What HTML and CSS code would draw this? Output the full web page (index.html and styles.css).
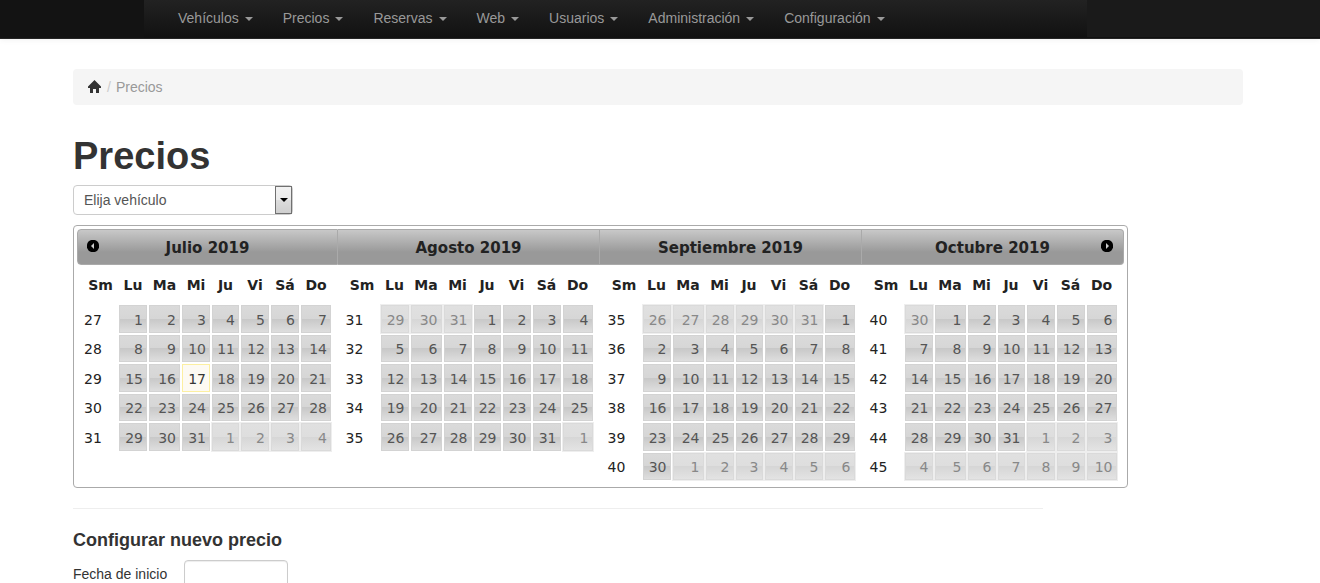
FILE: index.html
```html
<!DOCTYPE html>
<html lang="es">
<head>
<meta charset="utf-8">
<title>Precios</title>
<link rel="stylesheet" href="styles.css">
</head>
<body>
<header class="navbar">
  <div class="navbar-brand"></div>
  <nav class="navbar-menu">
    <a class="nav-link" href="#">Vehículos<span class="caret"></span></a>
    <a class="nav-link" href="#">Precios<span class="caret"></span></a>
    <a class="nav-link" href="#">Reservas<span class="caret"></span></a>
    <a class="nav-link" href="#">Web<span class="caret"></span></a>
    <a class="nav-link" href="#">Usuarios<span class="caret"></span></a>
    <a class="nav-link" href="#">Administración<span class="caret"></span></a>
    <a class="nav-link" href="#">Configuración<span class="caret"></span></a>
  </nav>
  <div class="navbar-user"></div>
</header>
<main class="page">
  <ul class="breadcrumb">
    <li><a class="home" href="#" aria-label="Inicio"><svg width="14" height="14" viewBox="0 0 14 14"><path fill="#333" d="M6.5 0L0 6.500V8H2V13H5V9H8V13H11V8H13V6.500Z"/></svg></a></li>
    <li class="divider">/</li>
    <li class="active">Precios</li>
  </ul>
  <h1 class="title">Precios</h1>
  <div class="select-wrap">
    <select class="select" aria-label="Vehículo"><option>Elija vehículo</option></select>
  </div>
  <div class="datepicker" id="datepicker"></div>
  <hr class="rule">
  <h4 class="subtitle">Configurar nuevo precio</h4>
  <form class="form-row">
    <label class="label" for="start">Fecha de inicio</label>
    <input class="input" id="start" type="text">
  </form>
</main>
<script src="calendar.js"></script>
</body>
</html>
```
FILE: calendar.js
```js
const MONTHS = [
  { name: "Julio", month: 6, week: 27, rows: 5 },
  { name: "Agosto", month: 7, week: 31, rows: 5 },
  { name: "Septiembre", month: 8, week: 35, rows: 6 },
  { name: "Octubre", month: 9, week: 40, rows: 6 }
];
const YEAR = 2019;
const DAYS = ["Lu", "Ma", "Mi", "Ju", "Vi", "Sá", "Do"];
const arrow = (label, side, points) =>
  `<button class="step ${side}" type="button" aria-label="${label}"><svg width="12" height="12" viewBox="0 0 12 12"><circle cx="6" cy="6" r="6.2"/><path fill="#ccc" d="${points}"/></svg></button>`;

function monthHtml(m, index) {
  const offset = (new Date(YEAR, m.month, 1).getDay() + 6) % 7;
  let rows = "";
  for (let r = 0; r < m.rows; r++) {
    let cells = `<td class="week">${m.week + r}</td>`;
    for (let d = 0; d < 7; d++) {
      const date = new Date(YEAR, m.month, 1 - offset + r * 7 + d);
      const day = date.getDate();
      if (date.getMonth() !== m.month) {
        cells += `<td class="other"><span class="day">${day}</span></td>`;
      } else {
        const today = m.month === 6 && day === 17 ? " today" : "";
        cells += `<td><a class="day${today}" href="#">${day}</a></td>`;
      }
    }
    rows += `<tr>${cells}</tr>`;
  }
  const prev = index === 0 ? arrow("Anterior", "prev", "M7 3V9L4 6Z") : "";
  const next = index === MONTHS.length - 1 ? arrow("Siguiente", "next", "M5 3V9L8 6Z") : "";
  return `<section class="month"><div class="month-head">${prev}${m.name} ${YEAR}${next}</div>
    <table class="days"><colgroup><col class="c-week"><col class="c-lu"><col class="c-ma"><col class="c-mi"><col class="c-ju"><col class="c-vi"><col class="c-sa"><col class="c-do"></colgroup>
    <thead><tr><th>Sm</th>${DAYS.map(d => `<th>${d}</th>`).join("")}</tr></thead>
    <tbody>${rows}</tbody></table></section>`;
}
document.getElementById("datepicker").innerHTML = MONTHS.map(monthHtml).join("");
```
FILE: styles.css
```css
*, *::before, *::after { box-sizing: border-box; }
body { margin: 0; background: #fff; color: #333; font: 14px/20px "Liberation Sans", Arial, sans-serif; overflow: hidden; }
a { text-decoration: none; }

.navbar { display: flex; height: 39px; border-bottom: 1px solid #252525; background: linear-gradient(#222, #111); box-shadow: 0 1px 6px rgba(0, 0, 0, .06); }
.navbar-brand { flex: 0 0 144px; background: #131313; }
.navbar-menu { display: flex; flex: 0 0 943px; padding-left: 19px; }
.nav-link { padding: 8px 15px; color: #999; white-space: nowrap; }
.caret { display: inline-block; margin-left: 6px; border: 4px solid transparent; border-top-color: #999; border-bottom: 0; vertical-align: middle; }
.navbar-user { flex: 1; height: 37px; background: #1a1a1a; }

.page { padding: 30px 77px 0 73px; }
.breadcrumb { display: flex; margin: 0 0 30px; padding: 8px 15px; border-radius: 4px; background: #f5f5f5; list-style: none; }
.home { display: flex; padding-top: 3px; }
.divider { padding: 0 5px; color: #ccc; }
.active { color: #999; }
.title { margin: 0 0 8px; font-size: 38px; line-height: 42px; }

.select-wrap { position: relative; width: 220px; height: 30px; margin-bottom: 10px; }
.select { width: 100%; height: 100%; padding: 0 10px; border: 1px solid #ccc; border-radius: 4px; background: #fff; color: #555; font: inherit; appearance: none; }
.select-wrap::before { content: ""; position: absolute; top: 1px; right: 1px; width: 17px; height: 28px; border: 1px solid #707070; background: linear-gradient(#f2f2f2, #ebebeb 50%, #ddd 50%, #cfcfcf); pointer-events: none; }
.select-wrap::after { content: ""; position: absolute; top: 13px; right: 5px; border: 4px solid transparent; border-top-color: #000; border-bottom: 0; pointer-events: none; }

.datepicker { display: grid; grid-template-columns: 261fr 262fr 262fr 262fr; max-width: 1055px; padding: 3px; border: 1px solid #aaa; border-radius: 4px; color: #222; font-family: "DejaVu Sans", Verdana, sans-serif; }
.month { padding-bottom: 3px; }
.month-head { position: relative; height: 36px; border: 1px solid #aaa; border-left-width: 0; background: linear-gradient(#c8c8c8, #999 65%, #999); font-size: 15px; font-weight: bold; line-height: 36px; text-align: center; }
.month:first-child .month-head { border-left-width: 1px; border-radius: 4px 0 0 4px; }
.month:last-child .month-head { border-radius: 0 4px 4px 0; }
.step { position: absolute; top: 10px; display: flex; padding: 0; border: 0; background: none; }
.prev { left: 9px; }
.next { right: 10px; }

.days { width: 249px; margin: 0 auto; border-collapse: collapse; table-layout: fixed; font-size: 14px; line-height: 20px; }
.days th { height: 39px; padding: 0; }
.days td { height: 29px; padding: 1px; text-align: right; }
.days tr:nth-child(odd) td { height: 30px; }
.days tr .week { padding-top: 2px; text-align: left; }
.c-week { width: 35px; }
.c-lu, .c-mi, .c-vi, .c-sa { width: 30px; }
.c-ma { width: 33px; }
.c-ju { width: 29px; }
.c-do { width: 32px; }
.day { display: block; height: 27px; padding: 3px 3px 0 0; border: 1px solid #d3d3d3; background: linear-gradient(#dadada, #d6d6d6 50%, #c8c8c8 50%, #dedede); color: #555; }
tr:nth-child(odd) .day { height: 28px; padding-top: 4px; }
.today { border-color: #fcefa1; background: #fdfaf3; color: #363636; }
.other { background: #eee; }
.other .day { border-color: #dadada; background: linear-gradient(#e0e0e0, #dedede 50%, #d6d6d6 50%, #e3e3e3); color: #888; }

.rule { max-width: 970px; margin: 20px 0 21px; border: 0; border-top: 1px solid #eee; }
.subtitle { margin: 0 0 10px; font-size: 18px; line-height: 20px; }
.form-row { display: flex; gap: 17px; margin: 0; }
.label { padding-top: 4px; }
.input { width: 104px; height: 30px; padding: 4px 6px; border: 1px solid #ccc; border-radius: 4px; box-shadow: inset 0 1px 1px rgba(0, 0, 0, .075); font: inherit; }
```
